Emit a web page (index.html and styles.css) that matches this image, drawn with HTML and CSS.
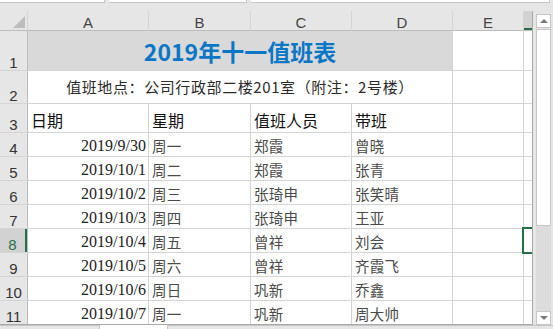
FILE: index.html
```html
<!DOCTYPE html>
<html lang="zh-CN">
<head>
  <meta charset="UTF-8">
  <title>2019年十一值班表</title>
  <link rel="stylesheet" href="styles.css">
</head>
<body>

  <div class="topbar">
    <span class="fbox fb-name"></span>
    <span class="fbox fb-mid"></span>
    <span class="fbox fb-formula"></span>
  </div>

  <div class="main">
    <div class="sheet">
      <div class="cell ch corner"><span class="tri"></span></div>
      <div class="cell ch">A</div>
      <div class="cell ch">B</div>
      <div class="cell ch">C</div>
      <div class="cell ch">D</div>
      <div class="cell ch">E</div>
      <div class="cell ch ch-on"></div>

      <div class="cell rh">1</div>
      <div class="cell title">2019年十一值班表</div>
      <div class="cell"></div>
      <div class="cell"></div>

      <div class="cell rh">2</div>
      <div class="cell note">值班地点：公司行政部二楼201室（附注：2号楼）</div>
      <div class="cell"></div>
      <div class="cell"></div>

      <div class="cell rh">3</div>
      <div class="cell hd">日期</div>
      <div class="cell hd">星期</div>
      <div class="cell hd">值班人员</div>
      <div class="cell hd">带班</div>
      <div class="cell"></div>
      <div class="cell"></div>

      <div class="cell rh">4</div>
      <div class="cell date">2019/9/30</div>
      <div class="cell txt">周一</div>
      <div class="cell txt">郑霞</div>
      <div class="cell txt">曾晓</div>
      <div class="cell"></div>
      <div class="cell"></div>

      <div class="cell rh">5</div>
      <div class="cell date">2019/10/1</div>
      <div class="cell txt">周二</div>
      <div class="cell txt">郑霞</div>
      <div class="cell txt">张青</div>
      <div class="cell"></div>
      <div class="cell"></div>

      <div class="cell rh">6</div>
      <div class="cell date">2019/10/2</div>
      <div class="cell txt">周三</div>
      <div class="cell txt">张琦申</div>
      <div class="cell txt">张笑晴</div>
      <div class="cell"></div>
      <div class="cell"></div>

      <div class="cell rh">7</div>
      <div class="cell date">2019/10/3</div>
      <div class="cell txt">周四</div>
      <div class="cell txt">张琦申</div>
      <div class="cell txt">王亚</div>
      <div class="cell"></div>
      <div class="cell"></div>

      <div class="cell rh rh-on">8</div>
      <div class="cell date">2019/10/4</div>
      <div class="cell txt">周五</div>
      <div class="cell txt">曾祥</div>
      <div class="cell txt">刘会</div>
      <div class="cell"></div>
      <div class="cell active"><span class="sel"></span></div>

      <div class="cell rh">9</div>
      <div class="cell date">2019/10/5</div>
      <div class="cell txt">周六</div>
      <div class="cell txt">曾祥</div>
      <div class="cell txt">齐霞飞</div>
      <div class="cell"></div>
      <div class="cell"></div>

      <div class="cell rh">10</div>
      <div class="cell date">2019/10/6</div>
      <div class="cell txt">周日</div>
      <div class="cell txt">巩新</div>
      <div class="cell txt">乔鑫</div>
      <div class="cell"></div>
      <div class="cell"></div>

      <div class="cell rh">11</div>
      <div class="cell date">2019/10/7</div>
      <div class="cell txt">周一</div>
      <div class="cell txt">巩新</div>
      <div class="cell txt">周大帅</div>
      <div class="cell"></div>
      <div class="cell"></div>
    </div>

    <div class="vscroll">
      <div class="sbtn"><span class="arrow-up"></span></div>
      <div class="thumb"></div>
      <div class="track"></div>
      <div class="sbtn"><span class="arrow-down"></span></div>
    </div>
  </div>

  <div class="tabs">
    <span class="tab tab-nav"></span>
    <span class="tab tab-on"></span>
    <span class="tab tab-rest"></span>
  </div>

</body>
</html>
```

FILE: styles.css
```css
* {
  margin: 0;
  padding: 0;
  box-sizing: border-box;
}
body {
  width: 553px;
  height: 329px;
  overflow: hidden;
  background-color: #e6e6e6;
  font-family: "Liberation Sans", Arial, sans-serif;
}

/* formula bar remains */
.topbar {
  height: 11px;
  display: flex;
  gap: 4px;
  align-items: flex-start;
}
.fbox {
  height: 3px;
  background-color: #fff;
  border-right: 1px solid #c6c6c6;
  border-bottom: 1px solid #c6c6c6;
}
.fb-name { width: 105px; }
.fb-mid { width: 138px; }
.fb-formula { width: 299px; }

.main {
  display: flex;
  height: 314px;
}

/* grid */
.sheet {
  display: grid;
  grid-template-columns: 27px 120px 101px 100px 100px 70px 8px;
  grid-template-rows: 19px 39px 32px 28px repeat(8, 23px);
  gap: 1px;
  background-color: #d4d4d4;
  border-right: 1px solid #a9a9a9;
  border-bottom: 1px solid #a9a9a9;
  overflow: hidden;
  width: 533px;
  height: 314px;
}
.cell {
  background-color: #fff;
  display: flex;
  align-items: flex-end;
  padding: 0 3px;
  white-space: nowrap;
  overflow: hidden;
  line-height: 20px;
}
.ch {
  background-color: #e6e6e6;
  justify-content: center;
  font-size: 15px;
  line-height: 14px;
  color: #444;
  box-shadow: 0 1px 0 #bcbcbc;
}
.ch-on {
  background-color: #d2d2d2;
  border-bottom: 2px solid #217346;
}
.corner {
  justify-content: flex-end;
  padding: 0 2px 2px 0;
}
.tri {
  width: 0;
  height: 0;
  border-left: 12px solid transparent;
  border-bottom: 12px solid #bdbdbd;
}
.rh {
  background-color: #e6e6e6;
  justify-content: center;
  font-size: 15px;
  line-height: 14px;
  color: #333;
  padding: 0;
  box-shadow: 1px 0 0 #bcbcbc;
}
.rh-on {
  background-color: #d2d2d2;
  color: #217346;
  border-right: 2px solid #217346;
}

.title {
  grid-column: span 4;
  background-color: #d9d9d9;
  justify-content: center;
  align-items: center;
  font-family: "Noto Sans CJK SC", sans-serif;
  font-weight: bold;
  font-size: 23px;
  line-height: 30px;
  color: #0a76c6;
}
.note {
  grid-column: span 4;
  justify-content: center;
  align-items: center;
  font-family: "Noto Sans CJK SC", sans-serif;
  font-size: 15px;
  letter-spacing: 0.6px;
  color: #2a2a2a;
}
.hd {
  font-family: "Noto Sans CJK SC", sans-serif;
  font-size: 16px;
  color: #111;
  padding-bottom: 2px;
}
.date {
  justify-content: flex-end;
  padding-right: 2px;
  font-family: "Liberation Serif", "Times New Roman", serif;
  font-size: 16px;
  color: #222;
}
.txt {
  font-family: "Noto Sans CJK SC", sans-serif;
  font-size: 14.5px;
  letter-spacing: 0.3px;
  color: #4a4a4a;
}

/* selected cell F8 */
.active {
  position: relative;
  overflow: visible;
}
.sel {
  position: absolute;
  left: -2px;
  top: -2px;
  right: -3px;
  bottom: -2px;
  border: 2px solid #217346;
  z-index: 1;
}

/* vertical scrollbar */
.vscroll {
  width: 20px;
  padding: 3px 2px 0 3px;
  display: flex;
  flex-direction: column;
}
.sbtn {
  height: 14px;
  background-color: #fff;
  border: 1px solid #c6c6c6;
  display: flex;
  justify-content: center;
  align-items: center;
}
.arrow-up {
  border-left: 4px solid transparent;
  border-right: 4px solid transparent;
  border-bottom: 4px solid #777;
}
.arrow-down {
  border-left: 4px solid transparent;
  border-right: 4px solid transparent;
  border-top: 4px solid #777;
}
.thumb {
  height: 197px;
  margin-top: 1px;
  background-color: #fff;
  border: 1px solid #c6c6c6;
}
.track {
  flex: 1;
  background-color: #dcdcdc;
}

/* sheet tabs */
.tabs {
  height: 4px;
  display: flex;
}
.tab {
  border-top: 1px solid #c6c6c6;
}
.tab-nav {
  width: 100px;
  border-right: 1px solid #c6c6c6;
}
.tab-on {
  width: 67px;
  background-color: #fff;
  border-top: none;
}
.tab-rest {
  flex: 1;
  border-left: 1px solid #c6c6c6;
}
```
